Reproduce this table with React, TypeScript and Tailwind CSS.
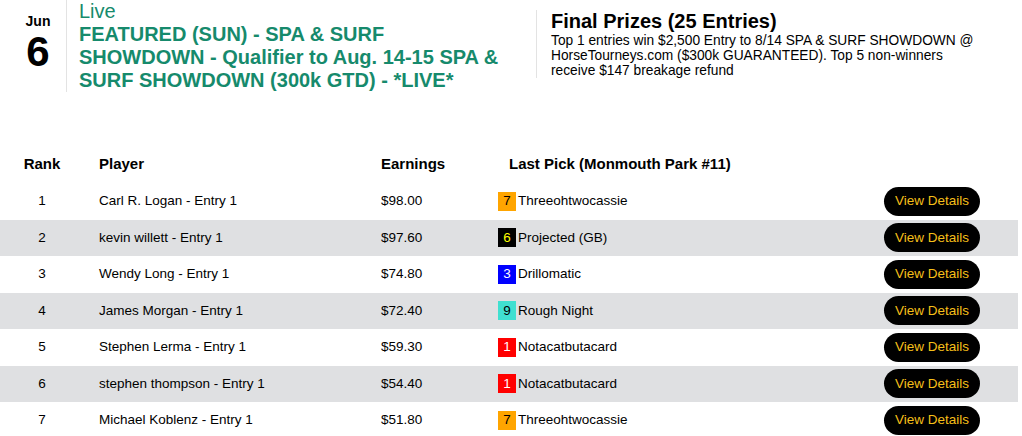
import React from "react";

interface Standing {
  rank: number;
  player: string;
  earnings: string;
  program: string;
  horse: string;
}

const standings: Standing[] = [
  { rank: 1, player: "Carl R. Logan - Entry 1", earnings: "$98.00", program: "7", horse: "Threeohtwocassie" },
  { rank: 2, player: "kevin willett - Entry 1", earnings: "$97.60", program: "6", horse: "Projected (GB)" },
  { rank: 3, player: "Wendy Long - Entry 1", earnings: "$74.80", program: "3", horse: "Drillomatic" },
  { rank: 4, player: "James Morgan - Entry 1", earnings: "$72.40", program: "9", horse: "Rough Night" },
  { rank: 5, player: "Stephen Lerma - Entry 1", earnings: "$59.30", program: "1", horse: "Notacatbutacard" },
  { rank: 6, player: "stephen thompson - Entry 1", earnings: "$54.40", program: "1", horse: "Notacatbutacard" },
  { rank: 7, player: "Michael Koblenz - Entry 1", earnings: "$51.80", program: "7", horse: "Threeohtwocassie" },
];

// saddle cloth colours by program number
const getBadgeClass = (program: string) => {
  if (program === "1") return "bg-[#ff0000] text-white";
  if (program === "3") return "bg-[#0000ff] text-white";
  if (program === "6") return "bg-black text-[#ffff00]";
  if (program === "7") return "bg-[#ffa500] text-black";
  if (program === "9") return "bg-[#40e0d0] text-black";
  return "bg-gray-300 text-black";
};

const App: React.FC = () => {
  return (
    <div className="w-[1022px] h-[436px] overflow-hidden bg-white text-black font-['Liberation_Sans',Arial,sans-serif]">
      {/* Tournament header */}
      <div className="flex items-start">
        <div className="flex">
          <div className="w-[67px] h-[92px] pl-[10px] border-r border-[#e3e3e3] flex flex-col items-center">
            <div className="mt-[13px] text-[14px] leading-[16px] font-bold">Jun</div>
            <div className="mt-[2px] text-[42px] leading-none font-bold">6</div>
          </div>
          <div className="w-[469px] pl-[12px] pr-[32px] text-[#168a6c] text-[20px] leading-[23px]">
            <div>Live</div>
            <div className="font-bold">
              FEATURED (SUN) - SPA &amp; SURF SHOWDOWN - Qualifier to Aug. 14-15 SPA &amp; SURF SHOWDOWN (300k GTD) - *LIVE*
            </div>
          </div>
        </div>
        <div className="mt-[10px] w-[446px] pl-[14px] border-l border-[#e3e3e3]">
          <div className="text-[20px] leading-[23px] font-bold">Final Prizes (25 Entries)</div>
          <div className="text-[13.75px] leading-[15px]">
            Top 1 entries win $2,500 Entry to 8/14 SPA &amp; SURF SHOWDOWN @ HorseTourneys.com ($300k GUARANTEED). Top 5 non-winners receive $147 breakage refund
          </div>
        </div>
      </div>

      {/* Leaderboard */}
      <div className="mt-[54px] w-[1018px]">
        <div className="flex items-center h-[37px] text-[15px] font-bold">
          <div className="w-[84px] text-center">Rank</div>
          <div className="w-[282px] pl-[15px]">Player</div>
          <div className="w-[128px] pl-[15px]">Earnings</div>
          <div className="pl-[15px]">Last Pick (Monmouth Park #11)</div>
        </div>
        {standings.map((row, index) => (
          <div
            key={row.rank}
            className={`flex items-center h-[36.5px] text-[13.5px] ${index % 2 === 1 ? "bg-[#dfe0e2]" : "bg-white"}`}
          >
            <div className="w-[84px] text-center">{row.rank}</div>
            <div className="w-[282px] pl-[15px]">{row.player}</div>
            <div className="w-[128px] pl-[15px]">{row.earnings}</div>
            <div className="flex-1 pl-[4px] flex items-center">
              <span className={`inline-flex items-center justify-center w-[18px] h-[19px] text-[13.5px] ${getBadgeClass(row.program)}`}>
                {row.program}
              </span>
              <span className="ml-[2px]">{row.horse}</span>
            </div>
            <div className="pr-[38px]">
              <button className="h-[29px] w-[96px] rounded-full bg-black text-[#f5bf19] text-[13.5px]">
                View Details
              </button>
            </div>
          </div>
        ))}
      </div>
    </div>
  );
};

export default App;
